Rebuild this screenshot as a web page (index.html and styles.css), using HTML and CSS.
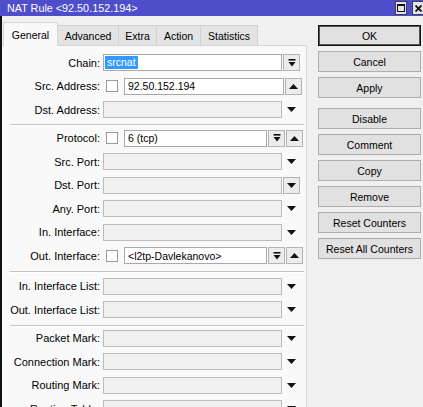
FILE: index.html
```html
<!DOCTYPE html>
<html>
<head>
<meta charset="utf-8">
<link rel="stylesheet" href="styles.css">
</head>
<body>
<div class="titlebar">
  <span class="title">NAT Rule &lt;92.50.152.194&gt;</span>
  <span class="tb-btns">
    <span class="tb-btn"><span class="max-glyph"></span></span>
    <span class="tb-btn"><svg width="7" height="7" viewBox="0 0 7 7"><path d="M0.5 0.5L6.5 6.5M6.5 0.5L0.5 6.5" stroke="#111" stroke-width="1.8"/></svg></span>
  </span>
</div>
<div class="main">
  <div class="left">
    <div class="tabs">
      <div class="tab active w-general">General</div>
      <div class="tab w-advanced">Advanced</div>
      <div class="tab w-extra">Extra</div>
      <div class="tab w-action">Action</div>
      <div class="tab w-stats">Statistics</div>
    </div>
    <div class="panel">
      <div class="row">
        <span class="lbl">Chain:</span>
        <span class="field wide"><span class="sel">srcnat</span></span>
        <span class="cbtn"><svg width="8" height="8" viewBox="0 0 8 8"><rect x="0.5" y="0" width="7" height="1.6" fill="#111"/><polygon points="0.5,3 7.5,3 4,7.5" fill="#111"/></svg></span>
      </div>
      <div class="row">
        <span class="lbl">Src. Address:</span>
        <span class="chk"></span>
        <span class="field narrow">92.50.152.194</span>
        <span class="cbtn"><svg width="9" height="5" viewBox="0 0 9 5"><polygon points="0,5 9,5 4.5,0" fill="#111"/></svg></span>
      </div>
      <div class="row">
        <span class="lbl">Dst. Address:</span>
        <span class="field wide off"></span>
        <span class="pbtn"><svg width="9" height="5" viewBox="0 0 9 5"><polygon points="0,0 9,0 4.5,5" fill="#111"/></svg></span>
      </div>
      <div class="sep sep-a"></div>
      <div class="row">
        <span class="lbl">Protocol:</span>
        <span class="chk"></span>
        <span class="field short">6 (tcp)</span>
        <span class="cbtn c-mid"><svg width="8" height="8" viewBox="0 0 8 8"><rect x="0.5" y="0" width="7" height="1.6" fill="#111"/><polygon points="0.5,3 7.5,3 4,7.5" fill="#111"/></svg></span>
        <span class="cbtn c-end"><svg width="9" height="5" viewBox="0 0 9 5"><polygon points="0,5 9,5 4.5,0" fill="#111"/></svg></span>
      </div>
      <div class="row">
        <span class="lbl">Src. Port:</span>
        <span class="field wide off"></span>
        <span class="pbtn"><svg width="9" height="5" viewBox="0 0 9 5"><polygon points="0,0 9,0 4.5,5" fill="#111"/></svg></span>
      </div>
      <div class="row">
        <span class="lbl">Dst. Port:</span>
        <span class="field wide off"></span>
        <span class="cbtn"><svg width="9" height="5" viewBox="0 0 9 5"><polygon points="0,0 9,0 4.5,5" fill="#111"/></svg></span>
      </div>
      <div class="row">
        <span class="lbl">Any. Port:</span>
        <span class="field wide off"></span>
        <span class="pbtn"><svg width="9" height="5" viewBox="0 0 9 5"><polygon points="0,0 9,0 4.5,5" fill="#111"/></svg></span>
      </div>
      <div class="row">
        <span class="lbl">In. Interface:</span>
        <span class="field wide off"></span>
        <span class="pbtn"><svg width="9" height="5" viewBox="0 0 9 5"><polygon points="0,0 9,0 4.5,5" fill="#111"/></svg></span>
      </div>
      <div class="row">
        <span class="lbl">Out. Interface:</span>
        <span class="chk"></span>
        <span class="field short">&lt;l2tp-Davlekanovo&gt;</span>
        <span class="cbtn c-mid"><svg width="8" height="8" viewBox="0 0 8 8"><rect x="0.5" y="0" width="7" height="1.6" fill="#111"/><polygon points="0.5,3 7.5,3 4,7.5" fill="#111"/></svg></span>
        <span class="cbtn c-end"><svg width="9" height="5" viewBox="0 0 9 5"><polygon points="0,5 9,5 4.5,0" fill="#111"/></svg></span>
      </div>
      <div class="sep"></div>
      <div class="row">
        <span class="lbl">In. Interface List:</span>
        <span class="field wide off"></span>
        <span class="pbtn"><svg width="9" height="5" viewBox="0 0 9 5"><polygon points="0,0 9,0 4.5,5" fill="#111"/></svg></span>
      </div>
      <div class="row">
        <span class="lbl">Out. Interface List:</span>
        <span class="field wide off"></span>
        <span class="pbtn"><svg width="9" height="5" viewBox="0 0 9 5"><polygon points="0,0 9,0 4.5,5" fill="#111"/></svg></span>
      </div>
      <div class="sep sep-c"></div>
      <div class="row">
        <span class="lbl">Packet Mark:</span>
        <span class="field wide off"></span>
        <span class="pbtn"><svg width="9" height="5" viewBox="0 0 9 5"><polygon points="0,0 9,0 4.5,5" fill="#111"/></svg></span>
      </div>
      <div class="row">
        <span class="lbl">Connection Mark:</span>
        <span class="field wide off"></span>
        <span class="pbtn"><svg width="9" height="5" viewBox="0 0 9 5"><polygon points="0,0 9,0 4.5,5" fill="#111"/></svg></span>
      </div>
      <div class="row">
        <span class="lbl">Routing Mark:</span>
        <span class="field wide off"></span>
        <span class="pbtn"><svg width="9" height="5" viewBox="0 0 9 5"><polygon points="0,0 9,0 4.5,5" fill="#111"/></svg></span>
      </div>
      <div class="row">
        <span class="lbl">Routing Table:</span>
        <span class="field wide off"></span>
        <span class="pbtn"><svg width="9" height="5" viewBox="0 0 9 5"><polygon points="0,0 9,0 4.5,5" fill="#111"/></svg></span>
      </div>
    </div>
  </div>
  <div class="buttons">
    <div class="btn default">OK</div>
    <div class="btn">Cancel</div>
    <div class="btn">Apply</div>
    <div class="btn gap-top">Disable</div>
    <div class="btn">Comment</div>
    <div class="btn">Copy</div>
    <div class="btn">Remove</div>
    <div class="btn">Reset Counters</div>
    <div class="btn">Reset All Counters</div>
  </div>
</div>
</body>
</html>
```
FILE: styles.css
```css
html, body {
  margin: 0;
  padding: 0;
}
body {
  width: 423px;
  height: 407px;
  overflow: hidden;
  background: #f0f0f0;
  font-family: "Liberation Sans", Arial, sans-serif;
  font-size: 10.5px;
  color: #000;
}
.titlebar {
  height: 16px;
  background: #4e4ecb;
  display: flex;
  justify-content: space-between;
  align-items: flex-start;
}
.title {
  color: #fff;
  font-size: 10.8px;
  line-height: 16px;
  padding-left: 7px;
}
.tb-btns {
  display: flex;
  gap: 5px;
  margin-top: 1px;
  margin-right: -1px;
}
.tb-btn {
  width: 10px;
  height: 12px;
  background: #e4e4e4;
  border: 1px solid #3a3a5a;
  display: flex;
  align-items: center;
  justify-content: center;
}
.max-glyph {
  width: 6px;
  height: 5px;
  border: 1px solid #111;
  border-top-width: 2px;
}
.main {
  display: flex;
  height: 391px;
}
.left {
  width: 305px;
  border-left: 2px solid #111;
  display: flex;
  flex-direction: column;
  min-height: 0;
}
.tabs {
  flex: none;
  height: 29px;
  display: flex;
  align-items: flex-end;
  padding-left: 1px;
  box-sizing: border-box;
}
.tab {
  box-sizing: border-box;
  height: 20px;
  background: #e3e3e3;
  border: 1px solid #d2d2d2;
  border-bottom: none;
  display: flex;
  align-items: center;
  justify-content: center;
  padding-top: 1px;
}
.tab.active {
  height: 24px;
  background: #f9f9f9;
  border-color: #d6d6d6;
  margin-bottom: -1px;
  padding-top: 0;
  position: relative;
  z-index: 1;
}
.w-general { width: 55px; }
.w-advanced { width: 61px; border-left: none; }
.w-extra { width: 38px; border-left: none; }
.w-action { width: 44px; border-left: none; }
.w-stats { width: 57px; border-left: none; }
.panel {
  flex: 1 1 auto;
  min-height: 0;
  overflow: hidden;
  background: #f9f9f9;
  border-top: 1px solid #d6d6d6;
  border-right: 1px solid #d6d6d6;
  padding-top: 5px;
}
.row {
  height: 23.5px;
  display: flex;
  align-items: center;
}
.lbl {
  width: 98px;
  flex: none;
  text-align: right;
  white-space: nowrap;
  margin-right: 3px;
  font-size: 11px;
}
.field {
  box-sizing: border-box;
  height: 17px;
  background: #fff;
  border: 1px solid #a9a9a9;
  display: flex;
  align-items: center;
  padding-left: 3px;
  white-space: nowrap;
  overflow: hidden;
  flex: none;
}
.field.wide { width: 179px; padding-left: 1px; }
.field.narrow { width: 160px; }
.field.short { width: 143px; }
.field.off {
  background: #f0f0f0;
  border-color: #bcbcbc;
}
.sel {
  background: #3399ff;
  color: #fff;
  padding: 1px 2px;
  line-height: 11px;
}
.chk {
  box-sizing: border-box;
  width: 12px;
  height: 12px;
  background: #fff;
  border: 1px solid #9a9a9a;
  margin-left: 3px;
  margin-right: 6px;
  flex: none;
}
.cbtn, .pbtn {
  box-sizing: border-box;
  width: 17px;
  height: 17px;
  margin-left: 1px;
  display: flex;
  align-items: center;
  justify-content: center;
  flex: none;
}
.cbtn {
  background: #ececec;
  border: 1px solid #b4b4b4;
}
.cbtn.c-end { margin-left: 1px; }
.sep {
  height: 7px;
  box-sizing: border-box;
  padding-top: 3px;
}
.sep::after {
  content: "";
  display: block;
  margin: 0 2px 0 8px;
  border-top: 1px solid #c4c4c4;
  border-bottom: 1px solid #ffffff;
}
.sep.sep-a {
  height: 5px;
  padding-top: 2px;
}
.sep.sep-c {
  height: 5px;
  padding-top: 3px;
}
.buttons {
  width: 103px;
  margin-left: 11px;
  padding-top: 9px;
  display: flex;
  flex-direction: column;
  gap: 5px;
}
.btn {
  box-sizing: border-box;
  height: 21px;
  background: #e1e1e1;
  border: 1px solid #adadad;
  display: flex;
  align-items: center;
  justify-content: center;
  white-space: nowrap;
}
.btn.default {
  border-color: #111;
  box-shadow: inset 0 0 0 1px #555;
}
.btn.gap-top { margin-top: 5px; }
```
